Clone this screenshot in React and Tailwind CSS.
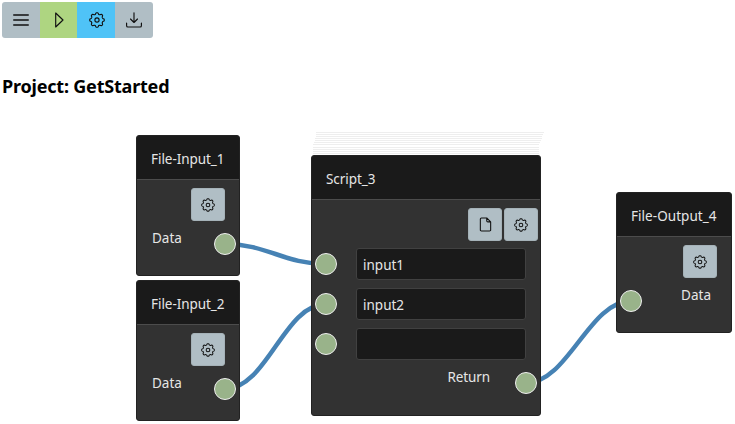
function Icon({ size = 16, children }) {
  return (
    <svg width={size} height={size} viewBox="0 0 16 16" fill="none" stroke="currentColor" strokeWidth="1.15" strokeLinecap="round" strokeLinejoin="round">
      {children}
    </svg>
  );
}

function MenuIcon() {
  return <Icon><path strokeWidth="1.3" d="M.7 3h14.6M.7 8h14.6M.7 13h14.6" /></Icon>;
}

function PlayIcon() {
  return <Icon><path d="M4.7 1v14L12 8z" /></Icon>;
}

function DownloadIcon() {
  return (
    <Icon>
      <path d="M.6 11v2.7a1.3 1.3 0 0 0 1.3 1.3h12.2a1.3 1.3 0 0 0 1.3-1.3V11M8 .7v9.8M4.5 7 8 10.5 11.5 7" />
    </Icon>
  );
}

function FileIcon() {
  return <Icon size={15}><path d="M3.5 1h5.8l4.2 4.2v8.6a1.2 1.2 0 0 1-1.2 1.2H3.7a1.2 1.2 0 0 1-1.2-1.2V2.2A1.2 1.2 0 0 1 3.7 1M9.3 1v3a1.2 1.2 0 0 0 1.2 1.2h3" /></Icon>;
}

// Eight rounded teeth, sampled around the hub.
const gearOutline =
  "M" +
  Array.from({ length: 96 }, (_, i) => {
    const a = (i / 96) * Math.PI * 2;
    const r = 6.55 + 0.75 * Math.tanh(1.8 * Math.cos(8 * a));
    return `${(8 + r * Math.cos(a)).toFixed(2)} ${(8 + r * Math.sin(a)).toFixed(2)}`;
  }).join("L") +
  "Z";

function Gear({ size = 14 }) {
  return (
    <Icon size={size}>
      <path d={gearOutline} />
      <circle cx="8" cy="8" r="2.1" />
    </Icon>
  );
}

function Socket({ className }) {
  return <span className={`absolute size-[22px] rounded-full border border-[#eeeeee] bg-[#99b38a] ${className}`} />;
}

function IconButton({ children }) {
  return (
    <button className="flex h-[33px] w-[34px] shrink-0 items-center justify-center rounded-[3px] border border-[#a5b2b8] bg-[#b0bec5] text-[#111]">
      {children}
    </button>
  );
}

function Node({ title, titleClass, className, children }) {
  return (
    <section className={`absolute flex flex-col rounded-[3px] border border-[#222] bg-[#323232] text-[13.5px] leading-[21px] text-[#e6e6e6] ${className}`}>
      <h2 className="flex h-[44px] shrink-0 items-center rounded-t-[2px] border-b border-[#4c4c4c] bg-[#1a1a1a] pl-[14px] pt-[4px]">
        <span className={`whitespace-nowrap ${titleClass}`}>{title}</span>
      </h2>
      {children}
    </section>
  );
}

export default function App() {
  return (
    <main className="relative h-[424px] w-[735px] overflow-hidden bg-white font-['Noto_Sans','Open_Sans',sans-serif]">
      <header className="pl-[2px] pt-[2px]">
        <nav className="flex h-9 w-[151px] overflow-hidden rounded-[3px] text-[#111]">
          <button className="flex w-[38px] items-center justify-center bg-[#b0bec5]"><MenuIcon /></button>
          <button className="flex w-[37px] items-center justify-center bg-[#aed581]"><PlayIcon /></button>
          <button className="flex w-[38px] items-center justify-center bg-[#4fc3f7] pl-px"><Gear size={16} /></button>
          <button className="flex w-[38px] items-center justify-center bg-[#b0bec5]"><DownloadIcon /></button>
        </nav>
        <h1 className="mt-[35px] whitespace-nowrap text-[18px] font-bold leading-[26px] tracking-[-0.2px] text-black">Project: GetStarted</h1>
      </header>

      <svg className="absolute left-0 top-0" width="735" height="424" fill="none">
        <g stroke="#eeeeee">
          <path d="M316 132.5H544M316 134.5H543M316 136.5H542M315 138.5H542M315 140.5H541M314 142.5H540M313 144.5H539M313 147.5H539M313 149.5H539M313 151.5H539M313 153.5H539" />
        </g>
        <g stroke="#4682b4" strokeWidth="4.5">
          <path d="M225 244C267 244 284 264 326 264" />
          <path d="M225 389C267 389 284 304 326 304" />
          <path d="M526 383C568 383 589 301 631 301" />
        </g>
      </svg>

      <Node title="File-Input_1" titleClass="tracking-[-0.05px]" className="left-[136px] top-[135px] h-[141px] w-[104px]">
        <div className="flex justify-end pr-[14px] pt-[8px]"><IconButton><Gear /></IconButton></div>
        <span className="pl-[15px] pt-[7px]">Data</span>
        <Socket className="left-[77px] top-[97px]" />
      </Node>

      <Node title="File-Input_2" titleClass="tracking-[-0.05px]" className="left-[136px] top-[280px] h-[141px] w-[104px]">
        <div className="flex justify-end pr-[14px] pt-[8px]"><IconButton><Gear /></IconButton></div>
        <span className="pl-[15px] pt-[7px]">Data</span>
        <Socket className="left-[77px] top-[97px]" />
      </Node>

      <Node title="Script_3" titleClass="tracking-[-0.05px]" className="left-[311px] top-[155px] h-[261px] w-[230px]">
        <div className="flex justify-end gap-[2px] pr-[2px] pt-[8px]">
          <IconButton><FileIcon /></IconButton>
          <IconButton><Gear /></IconButton>
        </div>
        <div className="flex flex-col gap-[8px] pl-[44px] pt-[7px]">
          <input readOnly className="h-8 w-[170px] rounded-[3px] border border-[#414141] bg-[#1a1a1a] px-[6px] pt-[2px] outline-none" defaultValue="input1" />
          <input readOnly className="h-8 w-[170px] rounded-[3px] border border-[#414141] bg-[#1a1a1a] px-[6px] pt-[2px] outline-none" defaultValue="input2" />
          <input readOnly className="h-8 w-[170px] rounded-[3px] border border-[#414141] bg-[#1a1a1a] px-[6px] outline-none" defaultValue="" />
        </div>
        <span className="self-end pr-[50px] pt-[7px] tracking-[-0.1px]">Return</span>
        <Socket className="left-[3px] top-[97px]" />
        <Socket className="left-[3px] top-[137px]" />
        <Socket className="left-[3px] top-[177px]" />
        <Socket className="left-[203px] top-[216px]" />
      </Node>

      <Node title="File-Output_4" titleClass="tracking-[0.05px]" className="left-[616px] top-[192px] h-[141px] w-[116px]">
        <div className="flex justify-end pr-[14px] pt-[8px]"><IconButton><Gear /></IconButton></div>
        <span className="self-end pr-[20px] pt-[7px]">Data</span>
        <Socket className="left-[3px] top-[97px]" />
      </Node>
    </main>
  );
}
